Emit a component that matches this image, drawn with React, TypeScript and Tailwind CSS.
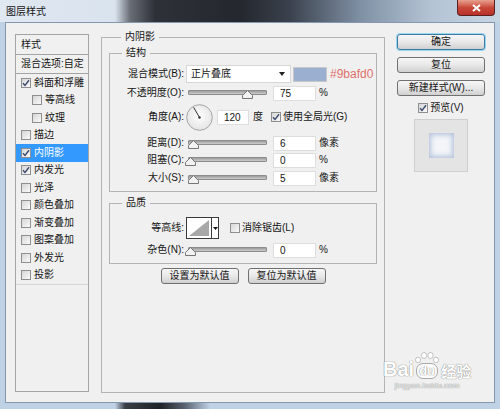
import React from 'react';

const font = "font-['Liberation_Sans','Noto_Sans_CJK_SC',sans-serif]";

function Check({ on }: { on?: boolean }) {
  return (
    <span className="flex h-[10px] w-[10px] shrink-0 items-center justify-center border border-[#8f8f8f] bg-linear-to-br from-[#d6d6d6] to-[#fafafa]">
      {on && (
        <svg viewBox="0 0 8 8" className="h-[8px] w-[8px]">
          <path d="M1 4.2 L3 6.4 L7 1.2" fill="none" stroke="#3b4a6b" strokeWidth="1.4" />
        </svg>
      )}
    </span>
  );
}

function Slider({ at }: { at: number }) {
  return (
    <div className="relative h-[14px] w-[79px] shrink-0">
      <div className="absolute left-0 right-0 top-[4px] h-[5px] rounded-[1px] border border-[#8c8c8c] bg-linear-to-b from-[#9c9c9c] to-[#cdcdcd]" />
      <svg className="absolute top-[4px]" style={{ left: at - 5 }} width="11" height="9" viewBox="0 0 11 9">
        <path d="M5.5 0.5 L10.5 5.5 L10.5 8.5 L0.5 8.5 L0.5 5.5 Z" fill="#f2f2f2" stroke="#767676" />
      </svg>
    </div>
  );
}

function Field({ v, w }: { v: string; w: string }) {
  return (
    <div className={`h-[15px] shrink-0 border border-[#dedede] bg-white pl-[6px] text-[10px] leading-[13px] ${w}`}>{v}</div>
  );
}

function Btn({ children, w, primary }: { children: React.ReactNode; w: string; primary?: boolean }) {
  return (
    <div
      className={`flex h-[16px] shrink-0 items-center justify-center rounded-[3px] border bg-linear-to-b from-[#f6f6f6] via-[#e8e8e8] to-[#d0d0d0] text-[10px] leading-none ${w} ${
        primary ? 'border-[#3a7ca8] shadow-[0_0_0_1px_#9cd6ee]' : 'border-[#707070]'
      }`}
    >
      {children}
    </div>
  );
}

function Label({ children }: { children: React.ReactNode }) {
  return <div className="w-[75px] shrink-0 pr-[1px] text-right text-[10px] leading-none">{children}</div>;
}

function SliderRow({ label, at, v, unit, mt }: { label: string; at: number; v: string; unit: string; mt: string }) {
  return (
    <div className={`flex h-[16px] items-center ${mt}`}>
      <Label>{label}</Label>
      <div className="ml-[3px]">
        <Slider at={at} />
      </div>
      <div className="ml-[6px]">
        <Field v={v} w="w-[43px]" />
      </div>
      <span className="ml-[3px] text-[10px] leading-none">{unit}</span>
    </div>
  );
}

const styles: { name: string; on?: boolean; sub?: boolean; sel?: boolean }[] = [
  { name: '斜面和浮雕', on: true },
  { name: '等高线', sub: true },
  { name: '纹理', sub: true },
  { name: '描边' },
  { name: '内阴影', on: true, sel: true },
  { name: '内发光', on: true },
  { name: '光泽' },
  { name: '颜色叠加' },
  { name: '渐变叠加' },
  { name: '图案叠加' },
  { name: '外发光' },
  { name: '投影' },
];

export default function App() {
  return (
    <div className={`relative flex h-[409px] w-[500px] flex-col overflow-hidden bg-[#bfd1e5] text-[#151515] ${font}`}>
      {/* title bar */}
      <div className="flex h-[22px] shrink-0 items-start justify-between bg-[linear-gradient(to_right,#e0e8f1_0%,#d9e3ee_23%,#6a6e76_26%,#2e3138_31%,#24272d_48%,#3b424e_58%,#7f90a4_72%,#b3c3d4_86%,#c8d5e3_100%)]">
        <span className="pl-[6px] pt-[6px] text-[10px] leading-[12px]">图层样式</span>
        <div className="mr-[5px] flex h-[16px] w-[38px] items-center justify-center rounded-b-[4px] border border-t-0 border-[#5a2020] bg-linear-to-b from-[#e8a090] via-[#c8483a] to-[#b83028]">
          <svg width="9" height="8" viewBox="0 0 9 8">
            <path d="M1 1 L8 7 M8 1 L1 7" stroke="#fff" strokeWidth="2" />
          </svg>
        </div>
      </div>

      {/* client */}
      <div className="mx-[5px] flex flex-1 items-start border border-[#8397ae] bg-[#f0f0f0] pl-[9px] pt-[8px]">
        {/* styles list */}
        <div className="mt-[3px] h-[358px] w-[74px] shrink-0 border border-[#a4a4a4] text-[10px] leading-none">
          <div className="flex h-[20px] items-center border-b border-[#a4a4a4] pl-[5px]">样式</div>
          <div className="flex h-[19px] items-center border-b border-[#a4a4a4] pl-[5px]">混合选项:自定</div>
          <div className="border-b border-[#d6d6d6]">
            {styles.map((s) => (
              <div
                key={s.name}
                className={`flex h-[17.5px] items-center gap-[3px] ${s.sub ? 'pl-[16px]' : 'pl-[5px]'} ${
                  s.sel ? 'bg-[#3399ff] text-white' : ''
                }`}
              >
                <Check on={s.on} />
                <span>{s.name}</span>
              </div>
            ))}
          </div>
        </div>

        {/* inner shadow group */}
        <fieldset className="ml-[12px] h-[362px] w-[284px] shrink-0 border border-[#b4b4b4] px-[7px]">
          <legend className="ml-[12px] px-[4px] text-[10px] leading-[12px]">内阴影</legend>

          <fieldset className="mt-[4px] border border-[#b4b4b4] pb-[5px]">
            <legend className="ml-[12px] px-[4px] text-[10px] leading-[12px]">结构</legend>

            <div className="mt-[6px] flex h-[18px] items-center">
              <Label>混合模式(B):</Label>
              <div className="ml-[1px] flex h-[18px] w-[105px] shrink-0 items-center justify-between border border-[#d6d6d6] bg-white pl-[4px] pr-[5px] text-[10px] leading-none">
                <span>正片叠底</span>
                <svg width="6" height="4" viewBox="0 0 6 4">
                  <path d="M0 0 L6 0 L3 4 Z" fill="#222" />
                </svg>
              </div>
              <div className="ml-[2px] h-[15px] w-[34px] shrink-0 border border-[#c8c8c8] bg-[#9bafd0]" />
              <span className="ml-[3px] text-[12px] leading-none text-[#e0706c]">#9bafd0</span>
            </div>

            <SliderRow label="不透明度(O):" at={59} v="75" unit="%" mt="mt-[2px]" />

            <div className="mt-[2px] flex h-[28px] items-center">
              <Label>角度(A):</Label>
              <svg className="ml-[1px] shrink-0" width="27" height="27" viewBox="0 0 27 27">
                <defs>
                  <radialGradient id="dial" cx="50%" cy="45%" r="60%">
                    <stop offset="0%" stopColor="#ffffff" />
                    <stop offset="100%" stopColor="#e2e2e2" />
                  </radialGradient>
                </defs>
                <circle cx="13.5" cy="13.5" r="12.8" fill="url(#dial)" stroke="#9c9c9c" strokeWidth="0.9" />
                <line x1="13.5" y1="13.5" x2="7.6" y2="3.3" stroke="#333" strokeWidth="1" />
                <circle cx="13.5" cy="13.5" r="1.2" fill="#333" />
              </svg>
              <div className="ml-[4px]">
                <Field v="120" w="w-[32px]" />
              </div>
              <span className="ml-[4px] text-[10px] leading-none">度</span>
              <div className="ml-[8px]">
                <Check on />
              </div>
              <span className="ml-[2px] text-[10px] leading-none">使用全局光(G)</span>
            </div>

            <SliderRow label="距离(D):" at={5} v="6" unit="像素" mt="mt-[4px]" />
            <SliderRow label="阻塞(C):" at={2} v="0" unit="%" mt="mt-[1px]" />
            <SliderRow label="大小(S):" at={5} v="5" unit="像素" mt="mt-[2px]" />
          </fieldset>

          <fieldset className="mt-[5px] border border-[#b4b4b4] pb-[5px]">
            <legend className="ml-[12px] px-[4px] text-[10px] leading-[12px]">品质</legend>

            <div className="mt-[8px] flex h-[22px] items-center">
              <Label>等高线:</Label>
              <div className="ml-[1px] flex h-[22px] w-[33px] shrink-0 border border-[#3a3a3a] bg-white">
                <svg width="24" height="20" viewBox="0 0 24 20" className="shrink-0">
                  <path d="M2 18 L22 2 L22 18 Z" fill="#a8a8a8" />
                </svg>
                <div className="flex flex-1 items-center justify-center border-l border-[#3a3a3a]">
                  <svg width="5" height="3" viewBox="0 0 5 3">
                    <path d="M0 0 L5 0 L2.5 3 Z" fill="#111" />
                  </svg>
                </div>
              </div>
              <div className="ml-[11px]">
                <Check />
              </div>
              <span className="ml-[2px] text-[10px] leading-none">消除锯齿(L)</span>
            </div>

            <SliderRow label="杂色(N):" at={2} v="0" unit="%" mt="mt-[3px]" />
          </fieldset>

          <div className="mt-[4px] flex justify-center gap-[9px]">
            <Btn w="w-[78px]">设置为默认值</Btn>
            <Btn w="w-[78px]">复位为默认值</Btn>
          </div>
        </fieldset>

        {/* right column */}
        <div className="ml-[12px] flex w-[88px] shrink-0 flex-col items-center">
          <div className="mt-[3px]">
            <Btn w="w-[88px]" primary>
              确定
            </Btn>
          </div>
          <div className="mt-[7px]">
            <Btn w="w-[88px]">复位</Btn>
          </div>
          <div className="mt-[7px]">
            <Btn w="w-[88px]">新建样式(W)...</Btn>
          </div>
          <div className="mt-[6px] flex h-[12px] items-center gap-[2px] text-[10px] leading-none">
            <Check on />
            <span>预览(V)</span>
          </div>
          <div className="mt-[5px] flex h-[53px] w-[54px] items-center justify-center border border-[#cfcfcf] bg-[#e4e4e4]">
            <div className="h-[25px] w-[25px] bg-[#f3f5f9] shadow-[inset_0_0_5px_2px_#b6c4dc]" />
          </div>
        </div>
      </div>

      {/* bottom frame */}
      <div className="h-[6px] shrink-0 bg-[linear-gradient(to_right,#bfd1e5_0%,#bfd1e5_23%,#3a3e46_25%,#1e2126_32%,#5a6472_37%,#bfd1e5_42%,#bfd1e5_100%)]" />

      {/* watermark */}
      <div className="pointer-events-none absolute left-[383px] top-[352px] flex flex-col items-center text-white [text-shadow:0_0_1px_#8a8a8a,0_0_1px_#8a8a8a]">
        <div className="flex items-end">
          <span className="text-[20px] font-bold leading-none">Bai</span>
          <span className="relative flex flex-col items-center">
            <svg width="26" height="11" viewBox="0 0 26 11">
              <ellipse cx="4" cy="8" rx="2.5" ry="2.8" fill="#fff" stroke="#a0a0a0" strokeWidth="0.6" />
              <ellipse cx="10" cy="3.5" rx="2.6" ry="3" fill="#fff" stroke="#a0a0a0" strokeWidth="0.6" />
              <ellipse cx="16.5" cy="3.5" rx="2.6" ry="3" fill="#fff" stroke="#a0a0a0" strokeWidth="0.6" />
              <ellipse cx="22" cy="8" rx="2.5" ry="2.8" fill="#fff" stroke="#a0a0a0" strokeWidth="0.6" />
            </svg>
            <span className="rounded-[7px] border border-[#a8a8a8] bg-white/70 px-[2px] text-[13px] font-bold leading-[14px]">du</span>
          </span>
          <span className="ml-[1px] text-[15px] font-bold leading-none">经验</span>
        </div>
        <span className="mt-[3px] text-[8px] leading-none text-white/90">jingyan.baidu.com</span>
      </div>
    </div>
  );
}
